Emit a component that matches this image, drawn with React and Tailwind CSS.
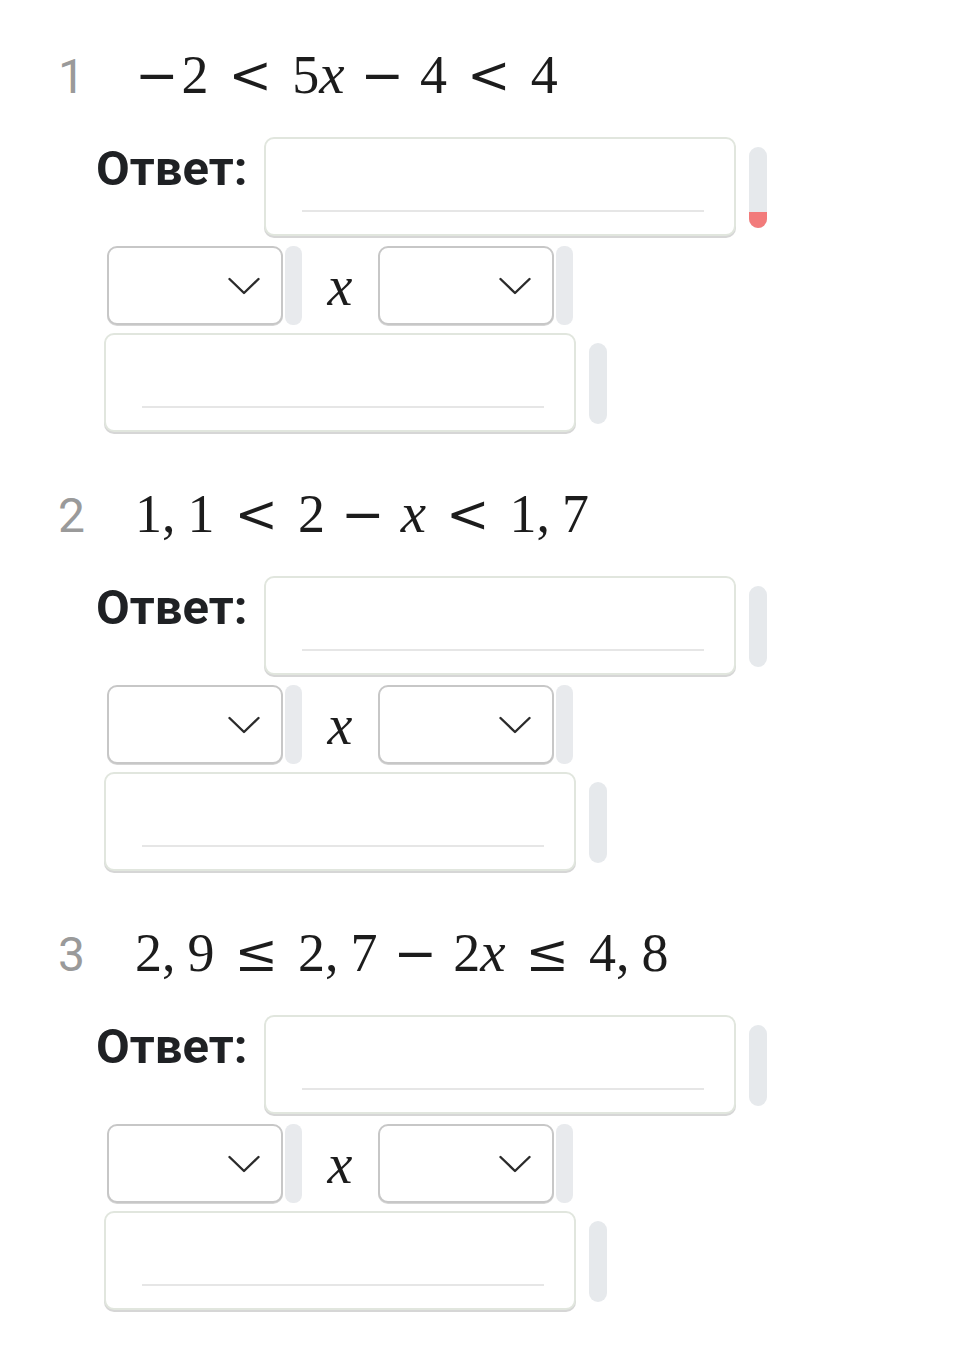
import React from 'react'

const Num = ({ children }) => (
  <span className="font-['Liberation_Serif',serif] text-[54px] text-[#1c1c1c]">{children}</span>
)

const Var = ({ children }) => (
  <span className="font-['Liberation_Serif',serif] text-[57px] italic text-[#1c1c1c]">{children}</span>
)

const Rel = ({ children }) => (
  <span className="mx-[20px] font-['DejaVu_Serif',serif] text-[52px] text-[#1c1c1c]">{children}</span>
)

const Bin = ({ children }) => (
  <span className="mx-[16px] font-['DejaVu_Serif',serif] text-[52px] text-[#1c1c1c]">{children}</span>
)

const Neg = () => (
  <span className="mr-[3px] font-['DejaVu_Serif',serif] text-[52px] text-[#1c1c1c]">−</span>
)

const Comma = () => (
  <span className="mr-[12px] font-['Liberation_Serif',serif] text-[54px] text-[#1c1c1c]">,</span>
)

const problems = [
  {
    n: 1,
    alert: true,
    expr: (
      <>
        <Neg />
        <Num>2</Num>
        <Rel>&lt;</Rel>
        <Num>5</Num>
        <Var>x</Var>
        <Bin>−</Bin>
        <Num>4</Num>
        <Rel>&lt;</Rel>
        <Num>4</Num>
      </>
    )
  },
  {
    n: 2,
    expr: (
      <>
        <Num>1</Num>
        <Comma />
        <Num>1</Num>
        <Rel>&lt;</Rel>
        <Num>2</Num>
        <Bin>−</Bin>
        <Var>x</Var>
        <Rel>&lt;</Rel>
        <Num>1</Num>
        <Comma />
        <Num>7</Num>
      </>
    )
  },
  {
    n: 3,
    expr: (
      <>
        <Num>2</Num>
        <Comma />
        <Num>9</Num>
        <Rel>≤</Rel>
        <Num>2</Num>
        <Comma />
        <Num>7</Num>
        <Bin>−</Bin>
        <Num>2</Num>
        <Var>x</Var>
        <Rel>≤</Rel>
        <Num>4</Num>
        <Comma />
        <Num>8</Num>
      </>
    )
  }
]

// field with a faint line near the bottom, like a handwriting input
const InputBox = () => (
  <div className="flex h-[99px] w-[472px] flex-col justify-end rounded-[10px] border-2 border-[#e1e6de] bg-white pb-[22px] pl-[36px] pr-[30px] shadow-[0_2px_0_#d6d6d6]">
    <div className="h-[2px] bg-[#e6e6e6]" />
  </div>
)

const SideBar = ({ alert = false }) => (
  <div className="ml-[13px] mt-[10px] flex h-[81px] w-[18px] flex-col justify-end overflow-hidden rounded-full bg-[#e6e9ec]">
    {alert && <div className="h-[16px] bg-[#f27b7b]" />}
  </div>
)

const Chevron = () => (
  <svg width="32" height="18" viewBox="0 0 32 18" fill="none">
    <polyline points="1.5,2 16,16 30.5,2" stroke="#2b2b2b" strokeWidth="2.4" strokeLinecap="round" strokeLinejoin="round" />
  </svg>
)

const SelectBox = () => (
  <div className="flex items-center">
    <div className="flex h-[79px] w-[176px] items-center justify-end rounded-[10px] border-2 border-[#c7c7c7] bg-white pr-[21px] shadow-[0_1px_0_#d6d6d6]">
      <Chevron />
    </div>
    <div className="ml-[2px] h-[79px] w-[17px] rounded-[8px] bg-[#e8eaed]" />
  </div>
)

const Problem = ({ n, expr, alert }) => (
  <div>
    <div className="flex h-[60px] items-baseline leading-none">
      <span className="w-[77px] font-['Roboto',sans-serif] text-[48px] text-[#9a9a9a]">{n}</span>
      {expr}
    </div>

    <div className="mt-[32px] flex items-start pl-[38px]">
      <span className="mt-[7px] w-[168px] font-['Roboto',sans-serif] text-[49px] font-bold leading-none text-[#1f2124]">
        Ответ:
      </span>
      <InputBox />
      <SideBar alert={alert} />
    </div>

    <div className="mt-[10px] flex items-center pl-[49px]">
      <SelectBox />
      <span className="w-[76px] text-center font-['Liberation_Serif',serif] text-[56px] italic leading-none text-[#1c1c1c]">x</span>
      <SelectBox />
    </div>

    <div className="mt-[8px] flex items-start pl-[46px]">
      <InputBox />
      <SideBar />
    </div>
  </div>
)

export default function App() {
  return (
    <div className="min-h-[1351px] w-full bg-white pl-[58px] pt-[45px]">
      <div className="flex flex-col gap-[52px]">
        {problems.map(p => (
          <Problem key={p.n} {...p} />
        ))}
      </div>
    </div>
  )
}
